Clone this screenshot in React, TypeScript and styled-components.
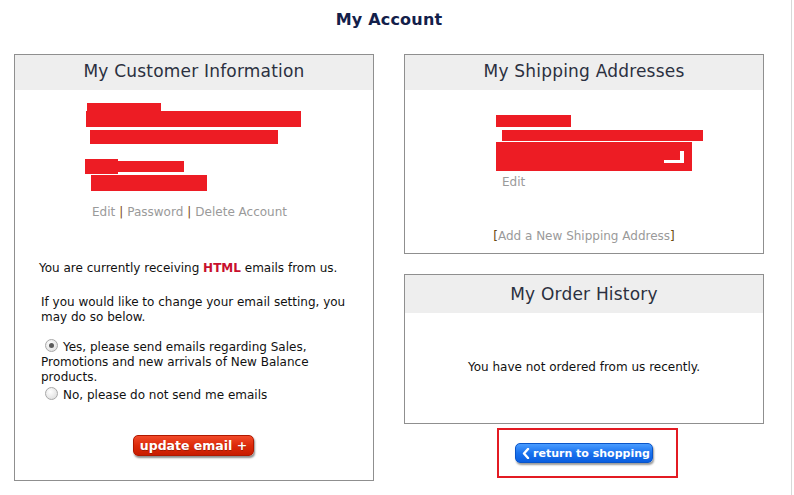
import React from "react";
import styled, { createGlobalStyle } from "styled-components";

const Global = createGlobalStyle`
  html, body { margin: 0; padding: 0; background: #fff; }
  body { font-family: "DejaVu Sans", Verdana, sans-serif; color: #111; }
`;

const Page = styled.div`
  width: 791px;
  height: 495px;
  border-right: 1px solid #d8d8d8;
  box-sizing: content-box;
  overflow: hidden;
`;

const Content = styled.div`
  width: 750px;
  margin-left: 14px;
`;

const Title = styled.h1`
  margin: 0;
  height: 54px;
  padding-top: 10px;
  box-sizing: border-box;
  text-align: center;
  font-size: 16px;
  font-weight: bold;
  color: #13204a;
  letter-spacing: 0.2px;
`;

const Columns = styled.div`
  display: grid;
  grid-template-columns: 360px 360px;
  column-gap: 30px;
  align-items: start;
`;

const Column = styled.div`
  display: flex;
  flex-direction: column;
`;

const Box = styled.section<{ $h: number; $mt?: number }>`
  border: 1px solid #8f8f8f;
  height: ${(p) => p.$h}px;
  margin-top: ${(p) => p.$mt ?? 0}px;
  box-sizing: border-box;
  display: flex;
  flex-direction: column;
`;

const BoxHeader = styled.h2<{ $h?: number; $pb?: number }>`
  margin: 0;
  height: ${(p) => p.$h ?? 35}px;
  padding-bottom: ${(p) => p.$pb ?? 4}px;
  box-sizing: border-box;
  background: #eeeeee;
  display: flex;
  align-items: center;
  justify-content: center;
  font-size: 17px;
  font-weight: normal;
  color: #2b3040;
  letter-spacing: 0.2px;
`;

const Body = styled.div<{ $pt?: number }>`
  flex: 1;
  display: flex;
  flex-direction: column;
  padding-top: ${(p) => p.$pt ?? 0}px;
  font-size: 12px;
  line-height: 15px;
`;

const Redacted = styled.div`
  display: flex;
  flex-direction: column;
  align-items: flex-start;
`;

const Bar = styled.div<{ $w: number; $h: number; $ml?: number; $mt?: number }>`
  background: #ed1c24;
  width: ${(p) => p.$w}px;
  height: ${(p) => p.$h}px;
  margin-left: ${(p) => p.$ml ?? 0}px;
  margin-top: ${(p) => p.$mt ?? 0}px;
  position: relative;
`;

const BarRow = styled.div<{ $ml?: number; $mt?: number }>`
  display: flex;
  align-items: center;
  margin-left: ${(p) => p.$ml ?? 0}px;
  margin-top: ${(p) => p.$mt ?? 0}px;
`;

const Notch = styled.span`
  position: absolute;
  right: 8px;
  bottom: 8px;
  width: 20px;
  height: 12px;
  border-right: 4px solid #fff;
  border-bottom: 3px solid #fff;
  box-sizing: border-box;
`;

const LinkRow = styled.div<{ $mt: number }>`
  margin-top: ${(p) => p.$mt}px;
  padding-right: 9px;
  text-align: center;
  color: #999;
`;

const Link = styled.a`
  color: #9a9a9a;
  text-decoration: none;
`;

const ShipEdit = styled(Link)`
  margin: 4px 0 0 6px;
`;

const Sep = styled.span`
  color: #7a4a10;
  margin: 0 4px;
`;

const Para = styled.p<{ $ml: number; $mt: number }>`
  margin: ${(p) => p.$mt}px 0 0 ${(p) => p.$ml}px;
  width: 315px;
`;

const Strong = styled.b`
  color: #c8102e;
`;

const RadioLine = styled.label<{ $mt: number }>`
  display: block;
  margin: ${(p) => p.$mt}px 0 0 26px;
  width: 300px;
`;

const Radio = styled.span<{ $checked?: boolean }>`
  display: inline-block;
  width: 11px;
  height: 11px;
  border-radius: 50%;
  border: 1px solid #a8a8a8;
  background: radial-gradient(circle at 40% 35%, #ffffff, #d8d8d8);
  vertical-align: -1px;
  margin: 0 5px 0 4px;
  position: relative;
  &::after {
    content: "";
    display: ${(p) => (p.$checked ? "block" : "none")};
    position: absolute;
    left: 3px;
    top: 3px;
    width: 5px;
    height: 5px;
    border-radius: 50%;
    background: #5a5a5a;
  }
`;

const ButtonRow = styled.div<{ $mt: number }>`
  margin-top: ${(p) => p.$mt}px;
  display: flex;
  justify-content: center;
  padding-right: 1px;
`;

const RedButton = styled.button`
  font-family: "DejaVu Sans", Verdana, sans-serif;
  font-weight: bold;
  font-size: 12.5px;
  color: #fff;
  border: 1px solid #b01800;
  border-radius: 5px;
  height: 21px;
  padding: 0 6px 1px;
  background: linear-gradient(#f24a2a, #dc2a0a 50%, #c81c00);
  box-shadow: 1px 2px 2px rgba(0, 0, 0, 0.45);
  text-shadow: 0 1px 0 rgba(0, 0, 0, 0.25);
  display: flex;
  align-items: center;
`;

const ShipBody = styled(Body)`
  padding-left: 91px;
`;

const Center = styled.div<{ $mt: number }>`
  margin: ${(p) => p.$mt}px 0 0 -91px;
  text-align: center;
`;

const Bracket = styled.span`
  color: #6a4a10;
`;

const EmptyBody = styled(Body)`
  align-items: center;
  justify-content: center;
  padding-bottom: 2px;
`;

const Highlight = styled.div`
  margin: 4px 0 0 93px;
  width: 181px;
  height: 50px;
  border: 2px solid #e31b23;
  box-sizing: border-box;
  display: flex;
  align-items: center;
  padding: 0 0 0 16px;
`;

const BlueButton = styled.button`
  font-family: "DejaVu Sans", Verdana, sans-serif;
  font-weight: bold;
  font-size: 11px;
  color: #fff;
  border: 1px solid #0a55c8;
  border-radius: 5px;
  height: 20px;
  width: 138px;
  padding: 0 0 0 6px;
  background: linear-gradient(#4a9cff, #1a72ee 50%, #0a5ee0);
  box-shadow: 1px 2px 2px rgba(0, 0, 0, 0.4);
  display: flex;
  align-items: center;
  gap: 3px;
  white-space: nowrap;
`;

const Chevron = () => (
  <svg width="8" height="11" viewBox="0 0 8 11">
    <path d="M6 1 L2 5.5 L6 10" fill="none" stroke="#fff" strokeWidth="2.4" strokeLinecap="round" strokeLinejoin="round" />
  </svg>
);

export default function App() {
  return (
    <Page>
      <Global />
      <Content>
        <Title>My Account</Title>
        <Columns>
          <Box $h={427}>
            <BoxHeader>My Customer Information</BoxHeader>
            <Body $pt={13}>
              <Redacted>
                <Bar $w={74} $h={8} $ml={72} />
                <Bar $w={215} $h={16} $ml={71} />
                <Bar $w={188} $h={14} $ml={75} $mt={3} />
                <BarRow $ml={70} $mt={15}>
                  <Bar $w={33} $h={15} />
                  <Bar $w={66} $h={11} />
                </BarRow>
                <Bar $w={116} $h={16} $ml={76} $mt={1} />
              </Redacted>
              <LinkRow $mt={14}>
                <Link>Edit</Link>
                <Sep>|</Sep>
                <Link>Password</Link>
                <Sep>|</Sep>
                <Link>Delete Account</Link>
              </LinkRow>
              <Para $ml={24} $mt={41}>
                You are currently receiving <Strong>HTML</Strong> emails from us.
              </Para>
              <Para $ml={26} $mt={19}>
                If you would like to change your email setting, you may do so below.
              </Para>
              <RadioLine $mt={14}>
                <Radio $checked />
                Yes, please send emails regarding Sales, Promotions and new arrivals of New Balance products.
              </RadioLine>
              <RadioLine $mt={2}>
                <Radio />
                No, please do not send me emails
              </RadioLine>
              <ButtonRow $mt={32}>
                <RedButton>update email +</RedButton>
              </ButtonRow>
            </Body>
          </Box>
          <Column>
            <Box $h={200}>
              <BoxHeader>My Shipping Addresses</BoxHeader>
              <ShipBody $pt={25}>
                <Redacted>
                  <Bar $w={75} $h={12} />
                  <Bar $w={201} $h={11} $ml={6} $mt={3} />
                  <Bar $w={196} $h={29} $mt={1}>
                    <Notch />
                  </Bar>
                </Redacted>
                <ShipEdit>Edit</ShipEdit>
                <Center $mt={39}>
                  <Bracket>[</Bracket>
                  <Link>Add a New Shipping Address</Link>
                  <Bracket>]</Bracket>
                </Center>
              </ShipBody>
            </Box>
            <Box $h={150} $mt={20}>
              <BoxHeader $h={38} $pb={1}>My Order History</BoxHeader>
              <EmptyBody>You have not ordered from us recently.</EmptyBody>
            </Box>
            <Highlight>
              <BlueButton>
                <Chevron />
                return to shopping
              </BlueButton>
            </Highlight>
          </Column>
        </Columns>
      </Content>
    </Page>
  );
}
